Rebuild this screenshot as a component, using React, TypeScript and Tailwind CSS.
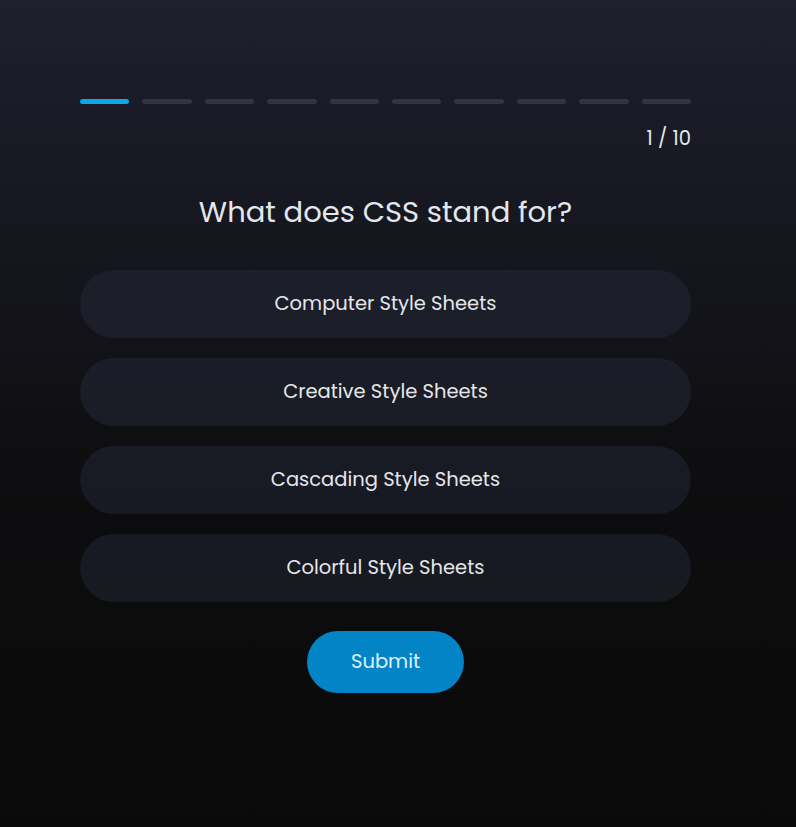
const options = [
  "Computer Style Sheets",
  "Creative Style Sheets",
  "Cascading Style Sheets",
  "Colorful Style Sheets",
];

const total = 10;
const current = 1;

export default function App() {
  return (
    <div className="min-h-[827px] w-full bg-gradient-to-b from-[#1f1f2e] via-[#0d0d0f] via-60% to-[#0a0a0a] font-['Poppins','Open_Sans','Noto_Sans',sans-serif]">
      <div className="ml-20 w-[611px] pt-[99px]">
        <div className="flex gap-[13px]">
          {Array.from({ length: total }).map((_, i) => (
            <div
              key={i}
              className={
                i < current
                  ? "h-[5px] flex-1 rounded-full bg-[#0ea5e9]"
                  : "h-[5px] flex-1 rounded-full bg-[#2f3541]"
              }
            />
          ))}
        </div>

        <p className="mt-[21px] text-right text-[19.5px] leading-7 text-gray-200">
          {current} / {total}
        </p>

        <h2 className="mt-[39px] text-center text-[29px] leading-10 text-[#e2e8f0]">
          What does CSS stand for?
        </h2>

        <div className="mt-[38px] flex flex-col gap-5">
          {options.map((opt) => (
            <button
              key={opt}
              className="h-[68px] w-full rounded-full bg-[#232838]/50 text-[19.5px] text-gray-200"
            >
              {opt}
            </button>
          ))}
        </div>

        <div className="mt-[29px] flex justify-center">
          <button className="h-[62px] w-[157px] rounded-full bg-[#0284c7] text-[19.5px] text-sky-100">
            Submit
          </button>
        </div>
      </div>
    </div>
  );
}
